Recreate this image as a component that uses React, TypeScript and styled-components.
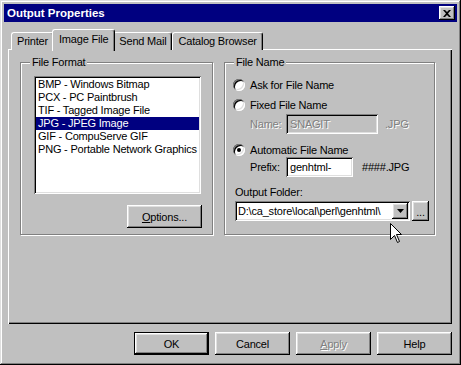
import React from 'react';
import styled, { createGlobalStyle, css } from 'styled-components';

const GlobalStyle = createGlobalStyle`
  html, body { margin: 0; padding: 0; background: #c0c0c0; }
  body {
    font-family: "Liberation Sans", Arial, sans-serif;
    font-size: 11px;
    letter-spacing: -0.2px;
    color: #000;
  }
  * { box-sizing: border-box; }
`;

const raised = css`
  box-shadow: inset -1px -1px #000, inset 1px 1px #fff, inset -2px -2px #808080,
    inset 2px 2px #dfdfdf;
`;

const sunken = css`
  box-shadow: inset 1px 1px #808080, inset -1px -1px #fff, inset 2px 2px #000,
    inset -2px -2px #dfdfdf;
`;

const disabledText = css`
  color: #808080;
  text-shadow: 1px 1px 0 #fff;
`;

const Window = styled.div`
  position: relative;
  width: 461px;
  height: 365px;
  padding: 4px;
  background: #c0c0c0;
  display: flex;
  flex-direction: column;
  box-shadow: inset -1px -1px #000, inset 1px 1px #dfdfdf, inset -2px -2px #808080,
    inset 2px 2px #fff;
`;

const TitleBar = styled.div`
  height: 18px;
  display: flex;
  align-items: center;
  justify-content: space-between;
  padding: 0 2px 0 3px;
  background: #000080;
  color: #fff;
  font-weight: bold;
  font-size: 11.5px;
  letter-spacing: 0;
`;

const CloseButton = styled.div`
  width: 16px;
  height: 14px;
  display: flex;
  align-items: center;
  justify-content: center;
  background: #c0c0c0;
  ${raised}
`;

const Body = styled.div`
  display: flex;
  flex-direction: column;
  padding: 7px 5px 0 4px;
`;

const TabStrip = styled.div`
  height: 21px;
  display: flex;
  align-items: flex-end;
  padding-left: 3px;
  position: relative;
  z-index: 1;
`;

const Tab = styled.div<{ $active?: boolean }>`
  height: ${(p) => (p.$active ? '22px' : '18px')};
  margin: ${(p) => (p.$active ? '0 -2px -1px -2px' : '0')};
  padding: ${(p) => (p.$active ? '3px 6px 0' : '2px 5px 0')};
  background: #c0c0c0;
  border-top: 1px solid #fff;
  border-left: 1px solid #fff;
  border-right: 1px solid #000;
  border-radius: 3px 3px 0 0;
  box-shadow: inset -1px 0 #808080;
  white-space: nowrap;
  position: relative;
  z-index: ${(p) => (p.$active ? 2 : 1)};
`;

const Panel = styled.div`
  width: 444px;
  height: 275px;
  margin-top: -1px;
  display: flex;
  gap: 11px;
  padding: 13px 0 0 12px;
  background: #c0c0c0;
  box-shadow: inset 1px 1px #fff, inset -1px -1px #000, inset -2px -2px #808080;
`;

const Group = styled.div<{ $width: number }>`
  position: relative;
  width: ${(p) => p.$width}px;
  height: 173px;
  border: 1px solid #808080;
  box-shadow: 1px 1px 0 #fff, inset 1px 1px 0 #fff;
  display: flex;
  flex-direction: column;
`;

const GroupLabel = styled.span`
  position: absolute;
  top: -7px;
  left: 9px;
  padding: 0 2px;
  background: #c0c0c0;
  line-height: 13px;
`;

const FormatContent = styled.div`
  display: flex;
  flex-direction: column;
  align-items: flex-end;
  padding: 13px 10px 0 13px;
`;

const ListBox = styled.div`
  width: 167px;
  height: 118px;
  align-self: flex-start;
  padding: 2px;
  background: #fff;
  ${sunken}
`;

const ListItem = styled.div<{ $selected?: boolean }>`
  height: 13px;
  line-height: 13px;
  padding-left: 2px;
  white-space: nowrap;
  overflow: hidden;
  background: ${(p) => (p.$selected ? '#000080' : 'transparent')};
  color: ${(p) => (p.$selected ? '#fff' : '#000')};
`;

const Button = styled.div<{ $default?: boolean; $disabled?: boolean; $top?: number }>`
  width: 75px;
  height: 23px;
  margin-top: ${(p) => p.$top ?? 0}px;
  display: flex;
  align-items: center;
  justify-content: center;
  background: #c0c0c0;
  ${(p) =>
    p.$default
      ? css`
          box-shadow: inset -1px -1px #000, inset 1px 1px #000, inset -2px -2px #000,
            inset 2px 2px #fff, inset -3px -3px #808080, inset 3px 3px #dfdfdf;
        `
      : raised}
  ${(p) => p.$disabled && disabledText}

  u {
    text-decoration: underline;
    text-underline-offset: 1px;
  }
`;

const NameContent = styled.div`
  display: flex;
  flex-direction: column;
  padding: 14px 0 0 8px;
`;

const Row = styled.div<{ $top?: number; $height?: number; $indent?: number }>`
  display: flex;
  align-items: center;
  height: ${(p) => p.$height ?? 16}px;
  margin-top: ${(p) => p.$top ?? 0}px;
  padding-left: ${(p) => p.$indent ?? 0}px;
  white-space: nowrap;
`;

const Radio = styled.span<{ $checked?: boolean }>`
  width: 12px;
  height: 12px;
  margin-right: 5px;
  border-radius: 50%;
  background: #fff;
  position: relative;
  box-shadow: inset 1px 1px #808080, inset -1px -1px #fff, inset 2px 2px #000,
    inset -2px -2px #dfdfdf;

  &::after {
    content: '';
    display: ${(p) => (p.$checked ? 'block' : 'none')};
    position: absolute;
    left: 4px;
    top: 4px;
    width: 4px;
    height: 4px;
    border-radius: 50%;
    background: #000;
  }
`;

const FieldLabel = styled.span<{ $disabled?: boolean }>`
  width: 36px;
  ${(p) => p.$disabled && disabledText}
`;

const TextBox = styled.div<{ $width: number; $disabled?: boolean }>`
  width: ${(p) => p.$width}px;
  height: 20px;
  display: flex;
  align-items: center;
  padding: 0 4px;
  background: ${(p) => (p.$disabled ? '#c0c0c0' : '#fff')};
  ${sunken}
  ${(p) => p.$disabled && disabledText}
`;

const Suffix = styled.span<{ $gap: number; $disabled?: boolean }>`
  margin-left: ${(p) => p.$gap}px;
  ${(p) => p.$disabled && disabledText}
`;

const Combo = styled.div`
  width: 175px;
  height: 20px;
  display: flex;
  align-items: center;
  padding: 2px;
  background: #fff;
  ${sunken}
`;

const ComboText = styled.span`
  flex: 1;
  padding-left: 1px;
  overflow: hidden;
  white-space: nowrap;
`;

const DropButton = styled.div`
  width: 16px;
  height: 16px;
  display: flex;
  align-items: center;
  justify-content: center;
  background: #c0c0c0;
  ${raised}
`;

const BrowseButton = styled.div`
  width: 17px;
  height: 20px;
  margin-left: 2px;
  display: flex;
  align-items: flex-end;
  justify-content: center;
  padding-bottom: 5px;
  background: #c0c0c0;
  line-height: 8px;
  ${raised}
`;

const ButtonRow = styled.div`
  display: flex;
  justify-content: flex-end;
  gap: 6px;
  margin-top: 8px;
`;

const Cursor = styled.svg`
  position: absolute;
  left: 390px;
  top: 223px;
`;

const formats = [
  'BMP - Windows Bitmap',
  'PCX - PC Paintbrush',
  'TIF - Tagged Image File',
  'JPG - JPEG Image',
  'GIF - CompuServe GIF',
  'PNG - Portable Network Graphics',
];

export default function App() {
  return (
    <>
      <GlobalStyle />
      <Window>
        <TitleBar>
          <span>Output Properties</span>
          <CloseButton>
            <svg width="8" height="7" viewBox="0 0 8 7">
              <path d="M0 0h2l2 2 2-2h2L5 3.5 8 7H6L4 5 2 7H0l3-3.5z" fill="#000" />
            </svg>
          </CloseButton>
        </TitleBar>

        <Body>
          <TabStrip>
            <Tab>Printer</Tab>
            <Tab $active>Image File</Tab>
            <Tab>Send Mail</Tab>
            <Tab>Catalog Browser</Tab>
          </TabStrip>

          <Panel>
            <Group $width={193}>
              <GroupLabel>File Format</GroupLabel>
              <FormatContent>
                <ListBox>
                  {formats.map((f) => (
                    <ListItem key={f} $selected={f.startsWith('JPG')}>
                      {f}
                    </ListItem>
                  ))}
                </ListBox>
                <Button $top={11}>
                  <span>
                    <u>O</u>ptions...
                  </span>
                </Button>
              </FormatContent>
            </Group>

            <Group $width={211}>
              <GroupLabel>File Name</GroupLabel>
              <NameContent>
                <Row>
                  <Radio />
                  Ask for File Name
                </Row>
                <Row $top={4}>
                  <Radio />
                  Fixed File Name
                </Row>
                <Row $top={1} $height={20} $indent={17}>
                  <FieldLabel $disabled>Name:</FieldLabel>
                  <TextBox $width={92} $disabled>
                    SNAGIT
                  </TextBox>
                  <Suffix $gap={7} $disabled>
                    .JPG
                  </Suffix>
                </Row>
                <Row $top={8} $height={15}>
                  <Radio $checked />
                  Automatic File Name
                </Row>
                <Row $height={20} $indent={17}>
                  <FieldLabel>Prefix:</FieldLabel>
                  <TextBox $width={67}>genhtml-</TextBox>
                  <Suffix $gap={9}>####.JPG</Suffix>
                </Row>
                <Row $top={8} $height={13} $indent={2}>
                  Output Folder:
                </Row>
                <Row $top={3} $height={20} $indent={2}>
                  <Combo>
                    <ComboText>D:\ca_store\local\perl\genhtml\</ComboText>
                    <DropButton>
                      <svg width="7" height="4" viewBox="0 0 7 4">
                        <path d="M0 0h7L3.5 4z" fill="#000" />
                      </svg>
                    </DropButton>
                  </Combo>
                  <BrowseButton>...</BrowseButton>
                </Row>
              </NameContent>
            </Group>
          </Panel>

          <ButtonRow>
            <Button $default>OK</Button>
            <Button>Cancel</Button>
            <Button $disabled>
              <span>
                <u>A</u>pply
              </span>
            </Button>
            <Button>Help</Button>
          </ButtonRow>
        </Body>

        <Cursor width="12" height="20" viewBox="0 0 12 20">
          <path
            d="M0.5 0.5V16.5L4.5 12.5L7.5 19.5L9.5 18.5L6.5 11.5H11.5Z"
            fill="#fff"
            stroke="#000"
            strokeWidth="1"
          />
        </Cursor>
      </Window>
    </>
  );
}
